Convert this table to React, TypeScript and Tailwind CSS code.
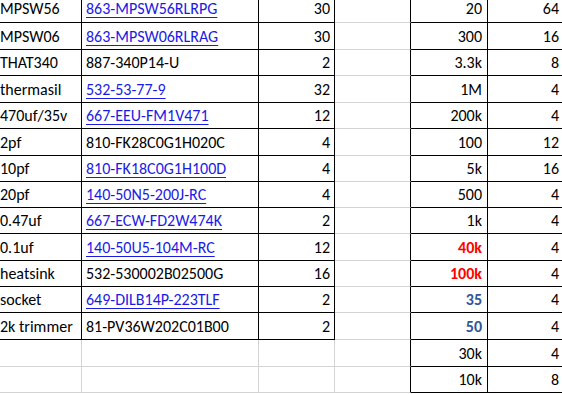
import React from "react";

type Row = {
  a: string;
  b: string;
  bLink: boolean;
  c: string;
  e: string;
  eStyle?: "red" | "blue";
  f: string;
  h: string;
};

const rows: Row[] = [
  { a: "MPSW56", b: "863-MPSW56RLRPG", bLink: true, c: "30", e: "20", f: "64", h: "h-[28px]" },
  { a: "MPSW06", b: "863-MPSW06RLRAG", bLink: true, c: "30", e: "300", f: "16", h: "h-[27px]" },
  { a: "THAT340", b: "887-340P14-U", bLink: false, c: "2", e: "3.3k", f: "8", h: "h-[26px]" },
  { a: "thermasil", b: "532-53-77-9", bLink: true, c: "32", e: "1M", f: "4", h: "h-[27px]" },
  { a: "470uf/35v", b: "667-EEU-FM1V471", bLink: true, c: "12", e: "200k", f: "4", h: "h-[26px]" },
  { a: "2pf", b: "810-FK28C0G1H020C", bLink: false, c: "4", e: "100", f: "12", h: "h-[27px]" },
  { a: "10pf", b: "810-FK18C0G1H100D", bLink: true, c: "4", e: "5k", f: "16", h: "h-[26px]" },
  { a: "20pf", b: "140-50N5-200J-RC", bLink: true, c: "4", e: "500", f: "4", h: "h-[26px]" },
  { a: "0.47uf", b: "667-ECW-FD2W474K", bLink: true, c: "2", e: "1k", f: "4", h: "h-[26px]" },
  { a: "0.1uf", b: "140-50U5-104M-RC", bLink: true, c: "12", e: "40k", eStyle: "red", f: "4", h: "h-[27px]" },
  { a: "heatsink", b: "532-530002B02500G", bLink: false, c: "16", e: "100k", eStyle: "red", f: "4", h: "h-[26px]" },
  { a: "socket", b: "649-DILB14P-223TLF", bLink: true, c: "2", e: "35", eStyle: "blue", f: "4", h: "h-[26px]" },
  { a: "2k trimmer", b: "81-PV36W202C01B00", bLink: false, c: "2", e: "50", eStyle: "blue", f: "4", h: "h-[27px]" },
  { a: "", b: "", bLink: false, c: "", e: "30k", f: "4", h: "h-[27px]" },
  { a: "", b: "", bLink: false, c: "", e: "10k", f: "8", h: "h-[26px]" },
];

export default function App() {
  return (
    <div
      className="w-[562px] h-[394px] overflow-hidden bg-white text-black"
      style={{ fontFamily: "Calibri, Carlito, Lato, 'Liberation Sans', sans-serif" }}
    >
      <div className="-ml-[4px] -mt-[5px] flex flex-col text-[16px] leading-none">
        {rows.map((r, i) => {
          const filled = r.a !== "";
          const bd = filled ? "border-black" : "border-[#d4d4d4]";
          const eColor =
            r.eStyle === "red"
              ? "text-[#ff0000] font-bold"
              : r.eStyle === "blue"
              ? "text-[#2f5597] font-bold"
              : "";
          return (
            <div key={i} className={`flex shrink-0 ${r.h}`}>
              <div className={`w-[86px] shrink-0 flex items-center pl-[4px] pt-[1px] border-r border-b ${bd} whitespace-nowrap`}>
                {r.a}
              </div>
              <div className={`w-[177px] shrink-0 flex items-center pl-[4px] pt-[1px] border-r border-b ${bd} whitespace-nowrap`}>
                {r.bLink ? (
                  <span className="text-[#1a1ae6] underline underline-offset-[3px] decoration-1">{r.b}</span>
                ) : (
                  r.b
                )}
              </div>
              <div className={`w-[76px] shrink-0 flex items-center justify-end pr-[4px] pt-[1px] border-r border-b ${bd}`}>
                {r.c}
              </div>
              <div className="w-[76px] shrink-0 border-r border-b border-r-black border-b-[#d4d4d4]" />
              <div className={`w-[77px] shrink-0 flex items-center justify-end pr-[5px] pt-[1px] border-r border-b border-black ${eColor}`}>
                {r.e}
              </div>
              <div className="w-[80px] shrink-0 flex items-center justify-end pr-[9px] pt-[1px] border-b border-black">
                {r.f}
              </div>
            </div>
          );
        })}
      </div>
    </div>
  );
}
